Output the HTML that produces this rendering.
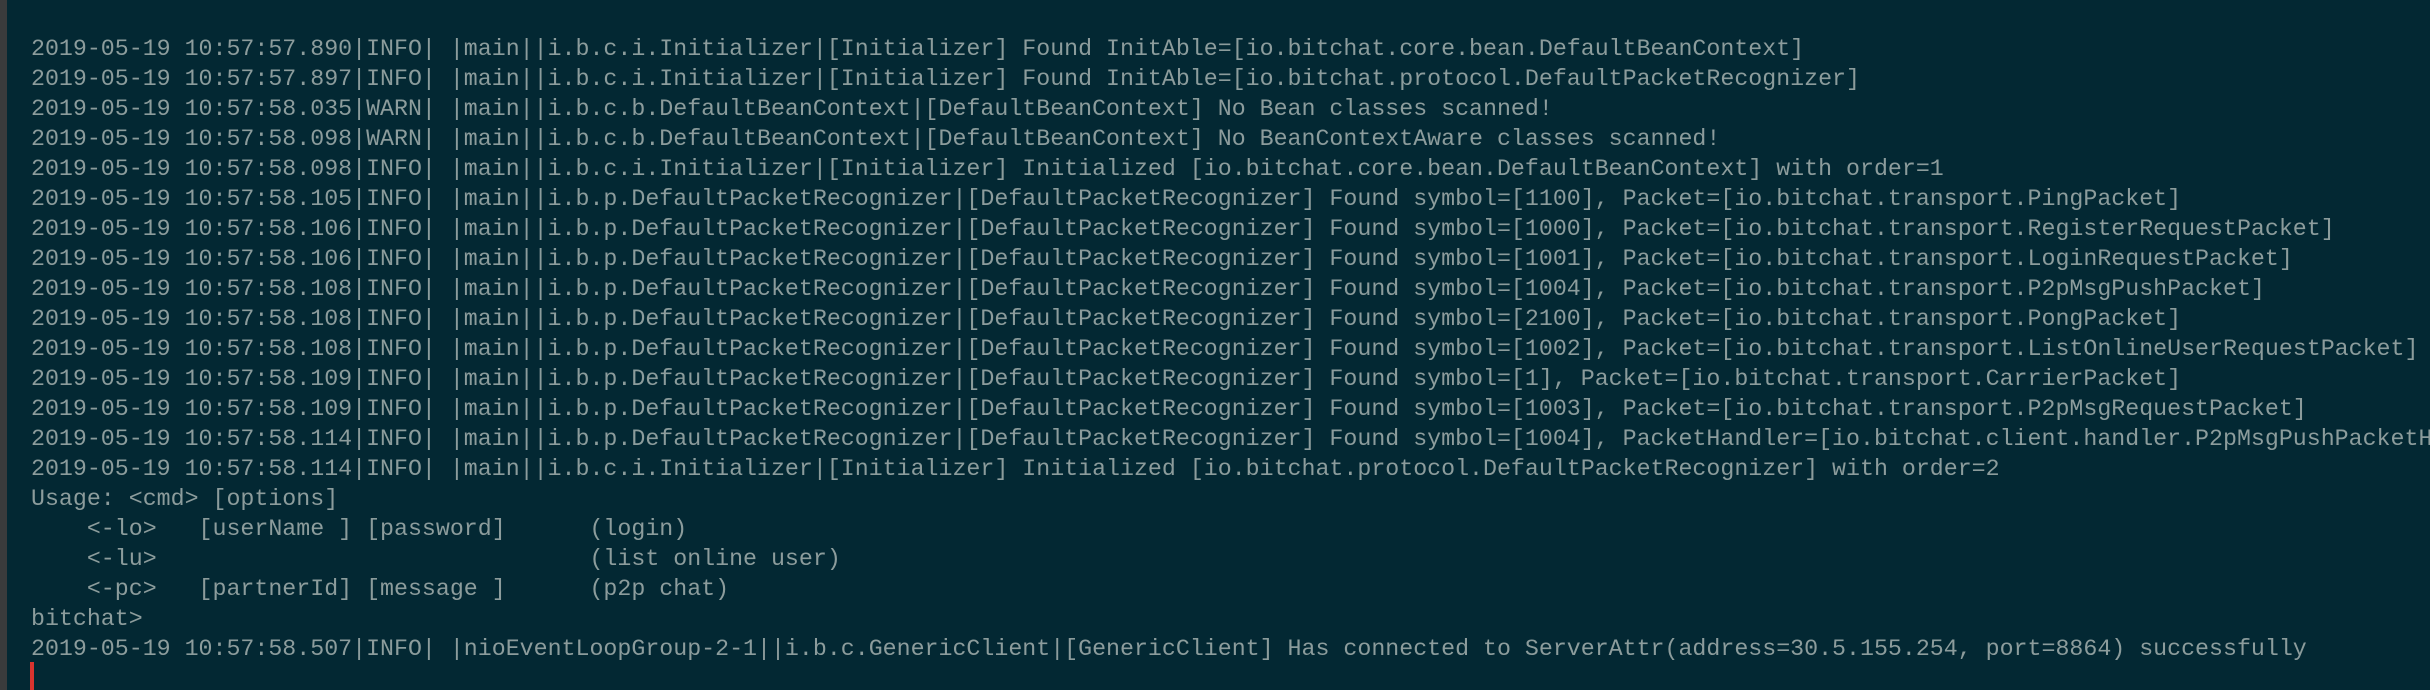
<!DOCTYPE html>
<html><head><meta charset="utf-8"><style>
html,body{margin:0;padding:0;}
body{width:2430px;height:690px;background:#032833;position:relative;overflow:hidden;}
.bar{position:absolute;left:0;top:0;width:7px;height:690px;background:#3a3b3c;}
pre{position:absolute;left:31px;top:34px;margin:0;font-family:"Liberation Mono",monospace;font-size:23.27px;line-height:30px;color:#8c9c9c;white-space:pre;}
.cur{position:absolute;left:30px;top:662px;width:4px;height:28px;background:#d9342f;}
</style></head><body>
<div class="bar"></div>
<pre>2019-05-19 10:57:57.890|INFO| |main||i.b.c.i.Initializer|[Initializer] Found InitAble=[io.bitchat.core.bean.DefaultBeanContext]
2019-05-19 10:57:57.897|INFO| |main||i.b.c.i.Initializer|[Initializer] Found InitAble=[io.bitchat.protocol.DefaultPacketRecognizer]
2019-05-19 10:57:58.035|WARN| |main||i.b.c.b.DefaultBeanContext|[DefaultBeanContext] No Bean classes scanned!
2019-05-19 10:57:58.098|WARN| |main||i.b.c.b.DefaultBeanContext|[DefaultBeanContext] No BeanContextAware classes scanned!
2019-05-19 10:57:58.098|INFO| |main||i.b.c.i.Initializer|[Initializer] Initialized [io.bitchat.core.bean.DefaultBeanContext] with order=1
2019-05-19 10:57:58.105|INFO| |main||i.b.p.DefaultPacketRecognizer|[DefaultPacketRecognizer] Found symbol=[1100], Packet=[io.bitchat.transport.PingPacket]
2019-05-19 10:57:58.106|INFO| |main||i.b.p.DefaultPacketRecognizer|[DefaultPacketRecognizer] Found symbol=[1000], Packet=[io.bitchat.transport.RegisterRequestPacket]
2019-05-19 10:57:58.106|INFO| |main||i.b.p.DefaultPacketRecognizer|[DefaultPacketRecognizer] Found symbol=[1001], Packet=[io.bitchat.transport.LoginRequestPacket]
2019-05-19 10:57:58.108|INFO| |main||i.b.p.DefaultPacketRecognizer|[DefaultPacketRecognizer] Found symbol=[1004], Packet=[io.bitchat.transport.P2pMsgPushPacket]
2019-05-19 10:57:58.108|INFO| |main||i.b.p.DefaultPacketRecognizer|[DefaultPacketRecognizer] Found symbol=[2100], Packet=[io.bitchat.transport.PongPacket]
2019-05-19 10:57:58.108|INFO| |main||i.b.p.DefaultPacketRecognizer|[DefaultPacketRecognizer] Found symbol=[1002], Packet=[io.bitchat.transport.ListOnlineUserRequestPacket]
2019-05-19 10:57:58.109|INFO| |main||i.b.p.DefaultPacketRecognizer|[DefaultPacketRecognizer] Found symbol=[1], Packet=[io.bitchat.transport.CarrierPacket]
2019-05-19 10:57:58.109|INFO| |main||i.b.p.DefaultPacketRecognizer|[DefaultPacketRecognizer] Found symbol=[1003], Packet=[io.bitchat.transport.P2pMsgRequestPacket]
2019-05-19 10:57:58.114|INFO| |main||i.b.p.DefaultPacketRecognizer|[DefaultPacketRecognizer] Found symbol=[1004], PacketHandler=[io.bitchat.client.handler.P2pMsgPushPacketH
2019-05-19 10:57:58.114|INFO| |main||i.b.c.i.Initializer|[Initializer] Initialized [io.bitchat.protocol.DefaultPacketRecognizer] with order=2
Usage: &lt;cmd&gt; [options]
    &lt;-lo&gt;   [userName ] [password]      (login)
    &lt;-lu&gt;                               (list online user)
    &lt;-pc&gt;   [partnerId] [message ]      (p2p chat)
bitchat&gt;
2019-05-19 10:57:58.507|INFO| |nioEventLoopGroup-2-1||i.b.c.GenericClient|[GenericClient] Has connected to ServerAttr(address=30.5.155.254, port=8864) successfully</pre>
<div class="cur"></div>
</body></html>
